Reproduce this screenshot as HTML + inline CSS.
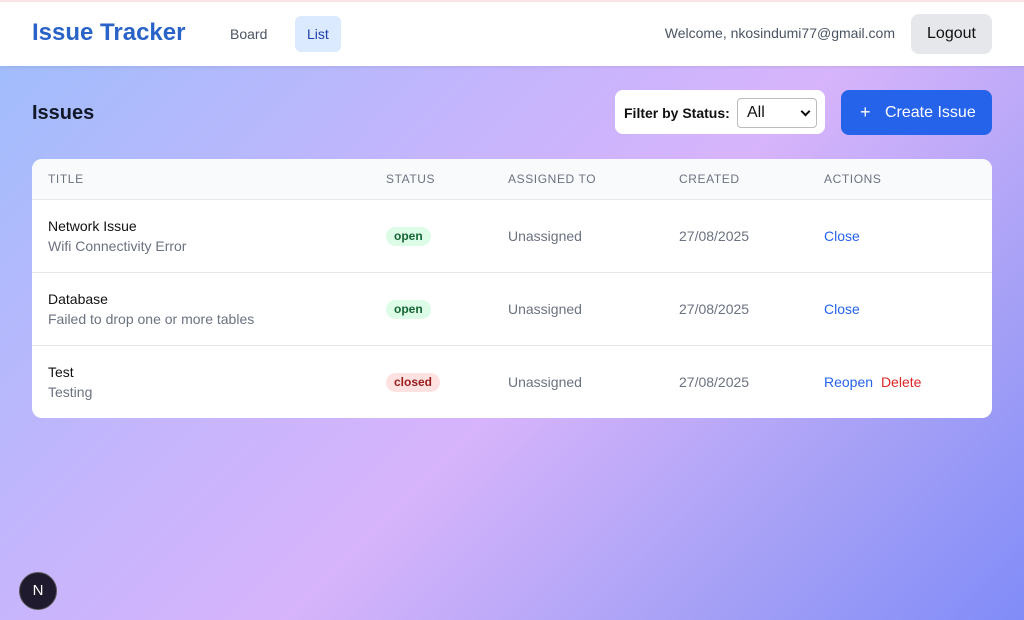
<!DOCTYPE html>
<html><head><style>
*{box-sizing:border-box;margin:0;padding:0}
body{width:1024px;height:620px;overflow:hidden;font-family:"Liberation Sans",Arial,sans-serif;background:linear-gradient(135deg,#9dbefb 0%,#c4b5fd 35%,#d7b4fb 55%,#a5a0f6 80%,#818cf8 100%);position:relative}
.top{position:absolute;top:0;left:0;right:0;height:66px;background:#fff;border-top:2px solid #fbe4e6;box-shadow:0 1px 3px rgba(0,0,0,.08)}
.logo{position:absolute;left:32px;top:17px;font-size:24px;font-weight:bold;color:#2a63c8}
.nav{position:absolute;top:14px;height:36px;line-height:36px;font-size:14px;color:#4b5563;padding:0 12px;border-radius:6px}
.welcome{position:absolute;right:129px;top:23px;font-size:14px;color:#4b5563}
.logout{position:absolute;left:911px;top:12px;width:81px;height:40px;background:#e5e7eb;border-radius:8px;font-size:16px;color:#111;text-align:center;line-height:40px}
h1{position:absolute;left:32px;top:102px;font-size:20px;color:#111827}
.filter{position:absolute;left:615px;top:90px;width:210px;height:44px;background:#fff;border-radius:8px}
.filter b{position:absolute;left:9px;top:15px;font-size:14px;color:#111}
.sel{position:absolute;left:122px;top:8px;width:80px;height:30px;border:1px solid #bbb;border-radius:4px;font-size:16px;padding:5px 9px;color:#111}
.sel:after{content:"";position:absolute;right:7px;top:9px;width:5px;height:5px;border-right:2px solid #111;border-bottom:2px solid #111;transform:rotate(45deg)}
.create{position:absolute;left:841px;top:90px;width:151px;height:45px;background:#2563eb;border-radius:8px;color:#fff;font-size:16px;line-height:45px}
.create .p{position:absolute;left:19px;font-size:18px}
.create .l{position:absolute;left:44px}
.card{position:absolute;left:32px;top:159px;width:960px;height:259px;background:#fff;border-radius:10px;overflow:hidden}
.th{height:41px;background:#f9fafb;border-bottom:1px solid #e5e7eb;position:relative}
.th span{position:absolute;top:13px;font-size:12px;color:#6b7280;letter-spacing:.6px}
.row{height:73px;border-bottom:1px solid #e5e7eb;position:relative;font-size:14px}
.row:last-child{border:none}
.t1{position:absolute;left:16px;top:18px;color:#111}
.t2{position:absolute;left:16px;top:38px;color:#6b7280}
.b{position:absolute;left:354px;top:27px;height:19px;line-height:19px;padding:0 8px;border-radius:10px;font-size:12px;font-weight:bold}
.o{background:#dcfce7;color:#166534}.c{background:#fee2e2;color:#991b1b}
.u{position:absolute;left:476px;top:28px;color:#6b7280}
.d{position:absolute;left:647px;top:28px;color:#6b7280}
.a{position:absolute;left:792px;top:28px;color:#2563eb}
.n{position:absolute;left:19px;top:572px;width:38px;height:38px;border-radius:50%;background:#1f1a2e;border:1px solid #555;color:#fff;text-align:center;line-height:36px;font-size:15px}
</style></head><body>
<div class="top">
<div class="logo">Issue Tracker</div>
<div class="nav" style="left:218px">Board</div>
<div class="nav" style="left:295px;background:#dbeafe;color:#1e40af">List</div>
<div class="welcome">Welcome, nkosindumi77@gmail.com</div>
<div class="logout">Logout</div>
</div>
<h1>Issues</h1>
<div class="filter"><b>Filter by Status:</b><div class="sel">All</div></div>
<div class="create"><span class="p">+</span><span class="l">Create Issue</span></div>
<div class="card">
<div class="th"><span style="left:16px">TITLE</span><span style="left:354px">STATUS</span><span style="left:476px">ASSIGNED TO</span><span style="left:647px">CREATED</span><span style="left:792px">ACTIONS</span></div>
<div class="row"><div class="t1">Network Issue</div><div class="t2">Wifi Connectivity Error</div><div class="b o">open</div><div class="u">Unassigned</div><div class="d">27/08/2025</div><div class="a">Close</div></div>
<div class="row"><div class="t1">Database</div><div class="t2">Failed to drop one or more tables</div><div class="b o">open</div><div class="u">Unassigned</div><div class="d">27/08/2025</div><div class="a">Close</div></div>
<div class="row"><div class="t1">Test</div><div class="t2">Testing</div><div class="b c">closed</div><div class="u">Unassigned</div><div class="d">27/08/2025</div><div class="a">Reopen <span style="color:#dc2626;margin-left:4px">Delete</span></div></div>
</div>
<div class="n">N</div>
</body></html>
